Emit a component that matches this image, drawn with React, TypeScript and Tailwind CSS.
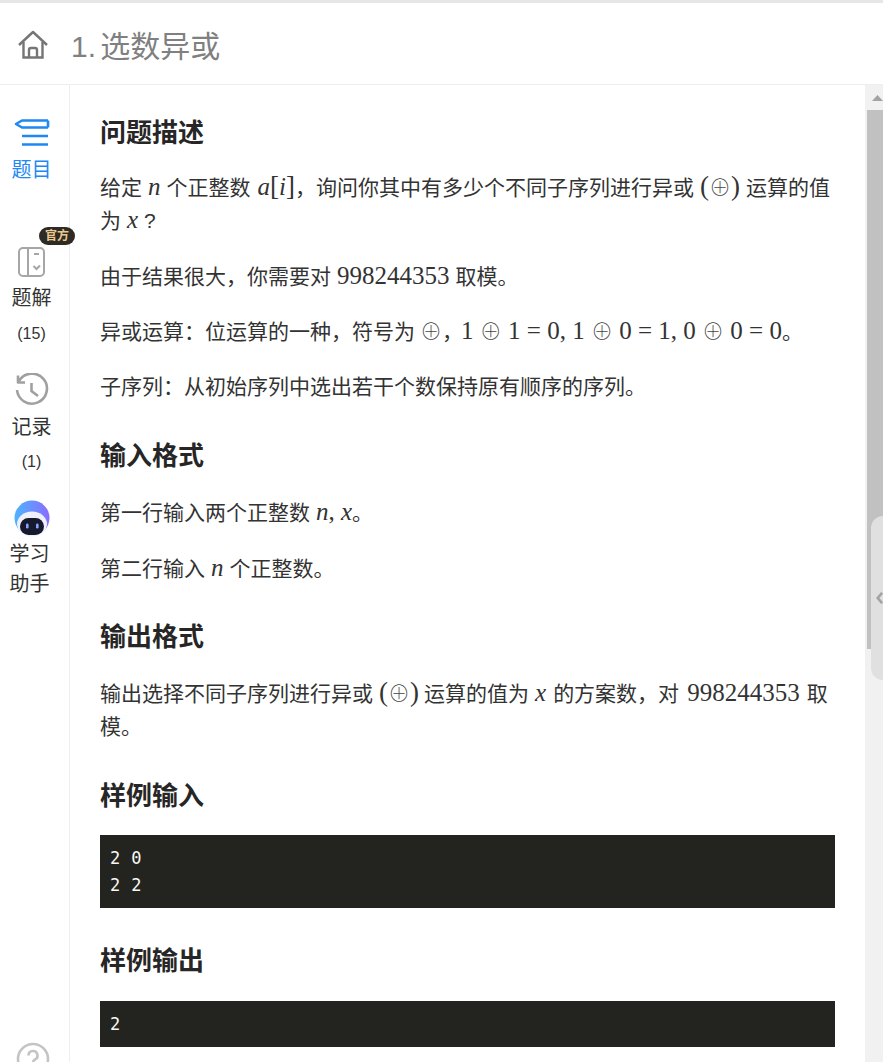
import React from "react";

const mathFont = "font-['Liberation_Serif',serif] text-[25px] leading-[24px] ";
const M = ({ children }: { children: React.ReactNode }) => <span className={mathFont + "mx-[6px]"}>{children}</span>;
const MT = ({ children, className = "" }: { children: React.ReactNode; className?: string }) => (
  <span className={mathFont + className}>{children}</span>
);
const V = ({ children }: { children: React.ReactNode }) => <i className="font-['Liberation_Serif',serif]">{children}</i>;
const O = () => <span className="font-['Noto_Sans_CJK_SC',sans-serif] font-thin text-[#444444] text-[22px]">⊕</span>;
const B = ({ children }: { children: React.ReactNode }) => <span className="text-[27px] font-thin">{children}</span>;

const H = ({ children, className }: { children: React.ReactNode; className: string }) => (
  <h2 className={"text-[26px] leading-[36px] font-bold text-[#262626] " + className}>{children}</h2>
);
const P = ({ children, className }: { children: React.ReactNode; className: string }) => (
  <p className={"text-[21px] leading-[33px] text-[#333333] " + className}>{children}</p>
);
const Code = ({ lines, className }: { lines: string[]; className: string }) => (
  <pre className={"bg-[#23241f] text-[#f8f8f2] font-['DejaVu_Sans_Mono',monospace] text-[17px] tracking-[0.35px] leading-[27px] px-[10px] pt-[10px] pb-[9px] " + className}>
    {lines.join("\n")}
  </pre>
);

export default function App() {
  return (
    <div className="h-[1062px] w-[883px] overflow-hidden bg-white flex flex-col font-['Liberation_Sans','Noto_Sans_CJK_SC',sans-serif]">
      <div className="h-[4px] shrink-0 border-t-[3px] border-[#e6e6e6]" />
      <header className="h-[81px] shrink-0 flex items-center border-b border-[#eeeeee] pl-[17px]">
        <svg width="32" height="32" viewBox="0 0 32 32" fill="none" stroke="#757575" strokeWidth="2.4" className="mt-[2px]">
          <path d="M2 16 L16 3 L30 16" strokeLinejoin="round" />
          <path d="M6.5 13 V28.5 H25.5 V13" />
          <path d="M12 28 V21 Q12 19 14 19 H18 Q20 19 20 21 V28" />
        </svg>
        <h1 className="ml-[22px] mt-[5px] text-[30px] leading-[40px] text-[#808080] [word-spacing:-4px]">1. 选数异或</h1>
      </header>
      <div className="flex-1 flex min-h-0">
        <aside className="w-[70px] shrink-0 border-r border-[#eeeeee] flex flex-col items-center relative text-[#333333]">
          <svg width="36" height="28" viewBox="0 0 36 28" fill="none" stroke="#1e88f5" strokeWidth="2.6" className="mt-[34px] ml-[-5px]">
            <path d="M34 1.5 H8 L2 5 L8 8.5 H34 M34 1.5 V8.5" strokeLinejoin="round" />
            <path d="M8 17 H34 M8 25.5 H34" />
          </svg>
          <div className="text-[20px] leading-[24px] text-[#1e88f5] ml-[-6px] mt-[11px]">题目</div>

          <svg width="30" height="32" viewBox="0 0 30 32" fill="none" stroke="#a6a6a6" strokeWidth="2" className="mt-[64px] ml-[-5px] shrink-0">
            <rect x="2" y="2" width="25" height="28" rx="4" />
            <path d="M11 2 V30" />
            <path d="M17 8 H22 M16.5 20 L19.5 23 L23 19.5" />
          </svg>
          <div className="absolute left-[39px] top-[142px] w-[36px] h-[18px] rounded-[9px] bg-[#2e2a25] text-[#e9c98f] text-[12px] leading-[18px] text-center font-bold">
            官方
          </div>
          <div className="text-[20px] leading-[24px] ml-[-6px] mt-[8px]">题解</div>
          <div className="text-[16px] leading-[20px] ml-[-6px] mt-[14px]">(15)</div>

          <svg width="34" height="34" viewBox="0 0 34 34" fill="none" stroke="#a0a0a0" strokeWidth="2.6" className="mt-[29px] ml-[-6px] shrink-0">
            <path d="M4 8 A15 15 0 1 1 2 17" />
            <path d="M3 2.5 V9.5 H10" strokeLinejoin="round" />
            <path d="M16.5 10 V18 L23 23" />
          </svg>
          <div className="text-[20px] leading-[24px] ml-[-6px] mt-[8px]">记录</div>
          <div className="text-[16px] leading-[20px] ml-[-6px] mt-[13px]">(1)</div>

          <svg width="36" height="37" viewBox="0 0 36 37" className="mt-[28px] ml-[-6px] shrink-0">
            <defs>
              <linearGradient id="bot" x1="0" y1="0" x2="1" y2="0">
                <stop offset="0" stopColor="#4db4ff" />
                <stop offset="1" stopColor="#8a6cff" />
              </linearGradient>
            </defs>
            <circle cx="18" cy="18" r="17.5" fill="url(#bot)" />
            <ellipse cx="18" cy="24" rx="15" ry="12.5" fill="#eef1fb" />
            <rect x="6" y="18" width="24" height="17" rx="8.5" fill="#17192e" />
            <rect x="12" y="23.5" width="2.6" height="5" rx="1.3" fill="#86a5ff" />
            <rect x="22" y="23.5" width="2.6" height="5" rx="1.3" fill="#86a5ff" />
          </svg>
          <div className="text-[20px] leading-[30px] ml-[-10px] mt-[2px] w-[40px] text-center">学习<br />助手</div>

          <svg width="34" height="34" viewBox="0 0 34 34" fill="none" className="absolute left-[16px] top-[957px]">
            <circle cx="17" cy="17" r="15" stroke="#c4c4c4" strokeWidth="2.6" />
            <path d="M12.5 13.5 A4.5 4.5 0 1 1 19 17.5 Q17 18.5 17 21" stroke="#c4c4c4" strokeWidth="2.6" />
          </svg>
        </aside>
        <main className="flex-1 min-w-0 overflow-hidden pl-[30px] pr-[30px]">
          <H className="mt-[30px]">问题描述</H>
          <P className="mt-[20px]">
            给定<M><V>n</V></M>个正整数<MT className="ml-[7px]"><V>a</V><B>[</B><V>i</V><B>]</B></MT>，询问你其中有多少个不同子序列进行异或<M><B>(</B><O /><B>)</B></M>运算的值为<M><V>x</V></M>?
          </P>
          <P className="mt-[23px]">由于结果很大，你需要对<M>998244353</M>取模。</P>
          <P className="mt-[22px]">
            异或运算：位运算的一种，符号为<MT className="ml-[5px]"><O /></MT>，<MT className="-ml-[2px]">1 <O /> 1 = 0, 1 <O /> 0 = 1, 0 <O /> 0 = 0</MT>。
          </P>
          <P className="mt-[22px]">子序列：从初始序列中选出若干个数保持原有顺序的序列。</P>
          <H className="mt-[35px]">输入格式</H>
          <P className="mt-[22px]">第一行输入两个正整数<MT className="ml-[6px]"><V>n</V>, <V>x</V></MT>。</P>
          <P className="mt-[23px]">第二行输入<M><V>n</V></M>个正整数。</P>
          <H className="mt-[34px]">输出格式</H>
          <P className="mt-[22px]">
            输出选择不同子序列进行异或<MT className="ml-[6px] mr-[5px]"><B>(</B><O /><B>)</B></MT>运算的值为<MT className="ml-[6px] mr-[7px]"><V>x</V></MT>的方案数，对<MT className="ml-[8px] mr-[7px]">998244353</MT>取模。
          </P>
          <H className="mt-[35px]">样例输入</H>
          <Code className="mt-[21px]" lines={["2 0", "2 2"]} />
          <H className="mt-[35px]">样例输出</H>
          <Code className="mt-[22px]" lines={["2"]} />
        </main>
        <div className="w-[18px] shrink-0 bg-[#f1f1f1] relative">
          <svg width="18" height="17" viewBox="0 0 18 17" className="block">
            <path d="M12.5 10 L18 16 H7 Z" fill="#a3a3a3" />
          </svg>
          <div className="mt-[8px] ml-[2px] w-[16px] h-[539px] bg-[#c1c1c1]" />
          <div className="absolute left-[6px] top-[431px] w-[12px] h-[164px] rounded-l-[14px] bg-[#e0e0e0] flex items-center">
            <svg width="8" height="16" viewBox="0 0 8 16" fill="none" stroke="#a3a3a3" strokeWidth="3" className="ml-[5px]">
              <path d="M7 2 L2 8 L7 14" />
            </svg>
          </div>
        </div>
      </div>
    </div>
  );
}
